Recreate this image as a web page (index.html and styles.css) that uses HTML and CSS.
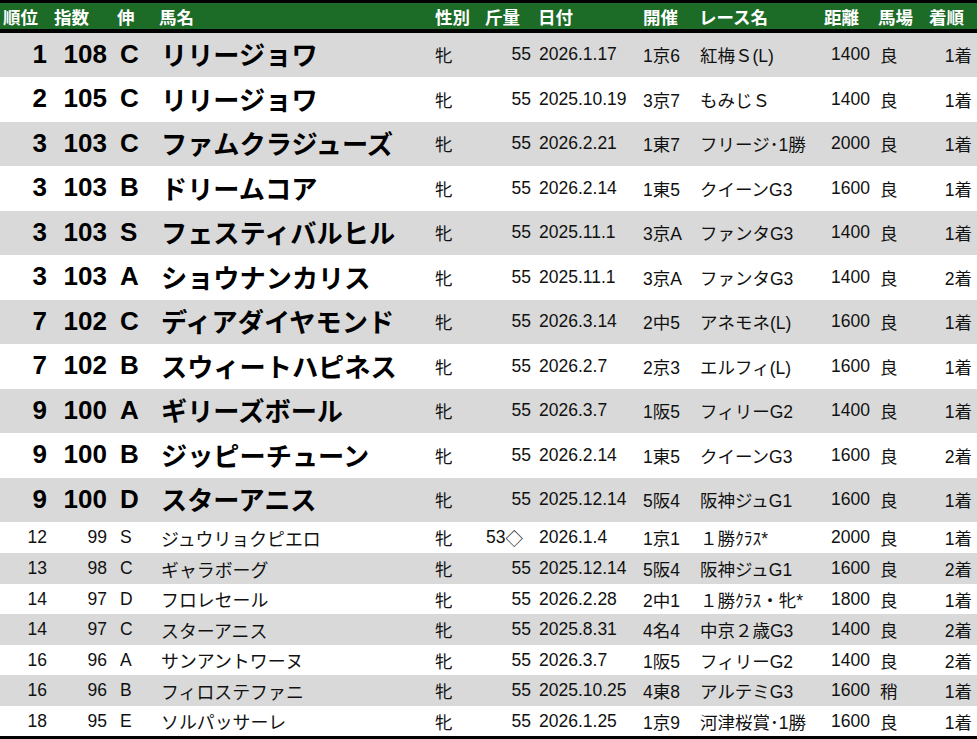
FILE: index.html
```html
<!DOCTYPE html>
<html lang="ja">
<head>
<meta charset="utf-8">
<title>指数ランキング</title>
<link rel="stylesheet" href="styles.css">
</head>
<body>
<div class="sheet">
  <div class="row head">
    <div class="c c1">順位</div><div class="c c2">指数</div><div class="c c3">伸</div><div class="c c4">馬名</div>
    <div class="c c5">性別</div><div class="c c6">斤量</div><div class="c c7">日付</div><div class="c c8">開催</div>
    <div class="c c9">レース名</div><div class="c c10">距離</div><div class="c c11">馬場</div><div class="c c12">着順</div>
  </div>

  <div class="row big gray h44">
    <div class="c c1 r">1</div><div class="c c2 r">108</div><div class="c c3">C</div><div class="c c4">リリージョワ</div>
    <div class="c c5 n">牝</div><div class="c c6 r n">55</div><div class="c c7 n">2026.1.17</div><div class="c c8 n">1京6</div>
    <div class="c c9 n">紅梅Ｓ(L)</div><div class="c c10 r n">1400</div><div class="c c11 n">良</div><div class="c c12 r n">1着</div>
  </div>
  <div class="row big h45">
    <div class="c c1 r">2</div><div class="c c2 r">105</div><div class="c c3">C</div><div class="c c4">リリージョワ</div>
    <div class="c c5 n">牝</div><div class="c c6 r n">55</div><div class="c c7 n">2025.10.19</div><div class="c c8 n">3京7</div>
    <div class="c c9 n">もみじＳ</div><div class="c c10 r n">1400</div><div class="c c11 n">良</div><div class="c c12 r n">1着</div>
  </div>
  <div class="row big gray h44">
    <div class="c c1 r">3</div><div class="c c2 r">103</div><div class="c c3">C</div><div class="c c4">ファムクラジューズ</div>
    <div class="c c5 n">牝</div><div class="c c6 r n">55</div><div class="c c7 n">2026.2.21</div><div class="c c8 n">1東7</div>
    <div class="c c9 n">フリージ･1勝</div><div class="c c10 r n">2000</div><div class="c c11 n">良</div><div class="c c12 r n">1着</div>
  </div>
  <div class="row big h45">
    <div class="c c1 r">3</div><div class="c c2 r">103</div><div class="c c3">B</div><div class="c c4">ドリームコア</div>
    <div class="c c5 n">牝</div><div class="c c6 r n">55</div><div class="c c7 n">2026.2.14</div><div class="c c8 n">1東5</div>
    <div class="c c9 n">クイーンG3</div><div class="c c10 r n">1600</div><div class="c c11 n">良</div><div class="c c12 r n">1着</div>
  </div>
  <div class="row big gray h44">
    <div class="c c1 r">3</div><div class="c c2 r">103</div><div class="c c3">S</div><div class="c c4">フェスティバルヒル</div>
    <div class="c c5 n">牝</div><div class="c c6 r n">55</div><div class="c c7 n">2025.11.1</div><div class="c c8 n">3京A</div>
    <div class="c c9 n">ファンタG3</div><div class="c c10 r n">1400</div><div class="c c11 n">良</div><div class="c c12 r n">1着</div>
  </div>
  <div class="row big h45">
    <div class="c c1 r">3</div><div class="c c2 r">103</div><div class="c c3">A</div><div class="c c4">ショウナンカリス</div>
    <div class="c c5 n">牝</div><div class="c c6 r n">55</div><div class="c c7 n">2025.11.1</div><div class="c c8 n">3京A</div>
    <div class="c c9 n">ファンタG3</div><div class="c c10 r n">1400</div><div class="c c11 n">良</div><div class="c c12 r n">2着</div>
  </div>
  <div class="row big gray h44">
    <div class="c c1 r">7</div><div class="c c2 r">102</div><div class="c c3">C</div><div class="c c4">ディアダイヤモンド</div>
    <div class="c c5 n">牝</div><div class="c c6 r n">55</div><div class="c c7 n">2026.3.14</div><div class="c c8 n">2中5</div>
    <div class="c c9 n">アネモネ(L)</div><div class="c c10 r n">1600</div><div class="c c11 n">良</div><div class="c c12 r n">1着</div>
  </div>
  <div class="row big h45">
    <div class="c c1 r">7</div><div class="c c2 r">102</div><div class="c c3">B</div><div class="c c4">スウィートハピネス</div>
    <div class="c c5 n">牝</div><div class="c c6 r n">55</div><div class="c c7 n">2026.2.7</div><div class="c c8 n">2京3</div>
    <div class="c c9 n">エルフィ(L)</div><div class="c c10 r n">1600</div><div class="c c11 n">良</div><div class="c c12 r n">1着</div>
  </div>
  <div class="row big gray h44">
    <div class="c c1 r">9</div><div class="c c2 r">100</div><div class="c c3">A</div><div class="c c4">ギリーズボール</div>
    <div class="c c5 n">牝</div><div class="c c6 r n">55</div><div class="c c7 n">2026.3.7</div><div class="c c8 n">1阪5</div>
    <div class="c c9 n">フィリーG2</div><div class="c c10 r n">1400</div><div class="c c11 n">良</div><div class="c c12 r n">1着</div>
  </div>
  <div class="row big h45">
    <div class="c c1 r">9</div><div class="c c2 r">100</div><div class="c c3">B</div><div class="c c4">ジッピーチューン</div>
    <div class="c c5 n">牝</div><div class="c c6 r n">55</div><div class="c c7 n">2026.2.14</div><div class="c c8 n">1東5</div>
    <div class="c c9 n">クイーンG3</div><div class="c c10 r n">1600</div><div class="c c11 n">良</div><div class="c c12 r n">2着</div>
  </div>
  <div class="row big gray h44">
    <div class="c c1 r">9</div><div class="c c2 r">100</div><div class="c c3">D</div><div class="c c4">スターアニス</div>
    <div class="c c5 n">牝</div><div class="c c6 r n">55</div><div class="c c7 n">2025.12.14</div><div class="c c8 n">5阪4</div>
    <div class="c c9 n">阪神ジュG1</div><div class="c c10 r n">1600</div><div class="c c11 n">良</div><div class="c c12 r n">1着</div>
  </div>

  <div class="row small h31">
    <div class="c c1 r">12</div><div class="c c2 r">99</div><div class="c c3">S</div><div class="c c4">ジュウリョクピエロ</div>
    <div class="c c5">牝</div><div class="c c6">53<span class="mark">◇</span></div><div class="c c7">2026.1.4</div><div class="c c8">1京1</div>
    <div class="c c9">１勝ｸﾗｽ*</div><div class="c c10 r">2000</div><div class="c c11">良</div><div class="c c12 r">1着</div>
  </div>
  <div class="row small gray h31">
    <div class="c c1 r">13</div><div class="c c2 r">98</div><div class="c c3">C</div><div class="c c4">ギャラボーグ</div>
    <div class="c c5">牝</div><div class="c c6 r">55</div><div class="c c7">2025.12.14</div><div class="c c8">5阪4</div>
    <div class="c c9">阪神ジュG1</div><div class="c c10 r">1600</div><div class="c c11">良</div><div class="c c12 r">2着</div>
  </div>
  <div class="row small h30">
    <div class="c c1 r">14</div><div class="c c2 r">97</div><div class="c c3">D</div><div class="c c4">フロレセール</div>
    <div class="c c5">牝</div><div class="c c6 r">55</div><div class="c c7">2026.2.28</div><div class="c c8">2中1</div>
    <div class="c c9">１勝ｸﾗｽ・牝*</div><div class="c c10 r">1800</div><div class="c c11">良</div><div class="c c12 r">1着</div>
  </div>
  <div class="row small gray h31">
    <div class="c c1 r">14</div><div class="c c2 r">97</div><div class="c c3">C</div><div class="c c4">スターアニス</div>
    <div class="c c5">牝</div><div class="c c6 r">55</div><div class="c c7">2025.8.31</div><div class="c c8">4名4</div>
    <div class="c c9">中京２歳G3</div><div class="c c10 r">1400</div><div class="c c11">良</div><div class="c c12 r">2着</div>
  </div>
  <div class="row small h30">
    <div class="c c1 r">16</div><div class="c c2 r">96</div><div class="c c3">A</div><div class="c c4">サンアントワーヌ</div>
    <div class="c c5">牝</div><div class="c c6 r">55</div><div class="c c7">2026.3.7</div><div class="c c8">1阪5</div>
    <div class="c c9">フィリーG2</div><div class="c c10 r">1400</div><div class="c c11">良</div><div class="c c12 r">2着</div>
  </div>
  <div class="row small gray h31">
    <div class="c c1 r">16</div><div class="c c2 r">96</div><div class="c c3">B</div><div class="c c4">フィロステファニ</div>
    <div class="c c5">牝</div><div class="c c6 r">55</div><div class="c c7">2025.10.25</div><div class="c c8">4東8</div>
    <div class="c c9">アルテミG3</div><div class="c c10 r">1600</div><div class="c c11">稍</div><div class="c c12 r">1着</div>
  </div>
  <div class="row small h30 last">
    <div class="c c1 r">18</div><div class="c c2 r">95</div><div class="c c3">E</div><div class="c c4">ソルパッサーレ</div>
    <div class="c c5">牝</div><div class="c c6 r">55</div><div class="c c7">2026.1.25</div><div class="c c8">1京9</div>
    <div class="c c9">河津桜賞･1勝</div><div class="c c10 r">1600</div><div class="c c11">良</div><div class="c c12 r">1着</div>
  </div>
</div>
</body>
</html>
```

FILE: styles.css
```css
html, body {
  margin: 0;
  padding: 0;
  background: #ffffff;
}

.sheet {
  width: 977px;
  border-top: 3px solid #000;
  font-family: "Liberation Sans", "Noto Sans CJK JP", sans-serif;
  color: #111;
}

.row {
  display: grid;
  grid-template-columns: 50px 62px 44px 276px 50px 53px 105px 57px 125px 54px 50px 51px;
  background: #ffffff;
}

.row.gray { background: #d9d9d9; }

.head {
  height: 26px;
  background: #1c6b27;
  border-bottom: 4px solid #000;
  color: #ffffff;
  font-family: "Noto Sans CJK JP", sans-serif;
  font-weight: 700;
  font-size: 17.5px;
}

.h44 { height: 44px; }
.h45 { height: 45px; }
.h31 { height: 31px; }
.h30 { height: 30px; }
.last { border-bottom: 3px solid #000; }

.c {
  display: flex;
  align-items: center;
  white-space: nowrap;
  padding-left: 3px;
  padding-right: 4px;
  min-width: 0;
}

.c.r { justify-content: flex-end; }

.head .c1 { padding-left: 3px; }
.head .c2 { padding-left: 4px; }
.head .c3 { padding-left: 5px; }
.head .c4 { padding-left: 3px; }
.head .c5 { padding-left: 3px; }
.head .c6 { padding-left: 3px; }
.head .c7 { padding-left: 3px; }
.head .c8 { padding-left: 3px; }
.head .c9 { padding-left: 2px; }
.head .c10 { padding-left: 2px; }
.head .c11 { padding-left: 2px; }
.head .c12 { padding-left: 3px; }

.big {
  font-size: 26px;
  font-weight: 700;
  color: #000;
}
.big .c { padding-bottom: 2px; }
.big .c4 { font-size: 26.2px; }
.big .c.n {
  font-size: 17.5px;
  font-weight: 400;
  color: #111;
  padding-bottom: 1px;
}

.small {
  font-size: 17.5px;
  font-weight: 400;
}
.small .c4 { font-size: 17.9px; }

.mark {
  font-family: "Noto Sans CJK JP", sans-serif;
  color: #111;
}

.c1 { padding-right: 3px; }
.c2 { padding-right: 5px; }
.c3 { padding-left: 8px; }
.c4 { padding-left: 5px; }
.c5 { padding-left: 3px; }
.c6 { padding-left: 4px; }
.c6.r { padding-right: 4px; }
.c7 { padding-left: 4px; }
.c8 { padding-left: 3px; }
.c9 { padding-left: 3px; }
.c10 { padding-right: 6px; }
.c11 { padding-left: 4px; }
.c12 { padding-right: 5px; }
```
